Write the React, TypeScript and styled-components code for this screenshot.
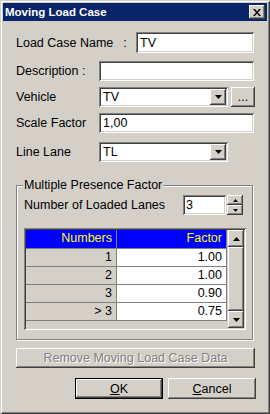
import React from 'react';
import styled, { createGlobalStyle, css } from 'styled-components';

const GlobalStyle = createGlobalStyle`
  html, body { margin: 0; padding: 0; background: #d4d0c8; }
  body {
    font-family: "Liberation Sans", Arial, sans-serif;
    font-size: 12.5px;
    color: #000;
  }
`;

const raised = css`
  background: #d4d0c8;
  box-shadow: inset -1px -1px #404040, inset 1px 1px #fff, inset -2px -2px #808080, inset 2px 2px #d4d0c8;
`;

const sunken = css`
  box-shadow: inset 1px 1px #808080, inset -1px -1px #fff, inset 2px 2px #404040, inset -2px -2px #d4d0c8;
`;

const Window = styled.div`
  width: 270px;
  height: 414px;
  box-sizing: border-box;
  padding: 3px;
  background: #d4d0c8;
  box-shadow: inset 1px 1px #d4d0c8, inset -1px -1px #404040, inset 2px 2px #fff, inset -2px -2px #808080;
  display: flex;
  flex-direction: column;
`;

const TitleBar = styled.div`
  height: 18px;
  flex: none;
  background: #0a246a;
  display: flex;
  align-items: center;
  justify-content: space-between;
  padding: 0 2px 0 2px;
`;

const Title = styled.span`
  color: #fff;
  font-weight: bold;
  font-size: 11.5px;
`;

const CloseButton = styled.div`
  ${raised};
  width: 16px;
  height: 14px;
  display: flex;
  align-items: center;
  justify-content: center;
`;

const Body = styled.div`
  padding: 0 13px;
  display: flex;
  flex-direction: column;
`;

const FieldRow = styled.div<{ $top: number; $h?: number }>`
  display: flex;
  align-items: center;
  height: ${p => p.$h ?? 20}px;
  margin-top: ${p => p.$top}px;
`;

const Label = styled.span<{ $width: number }>`
  width: ${p => p.$width}px;
  flex: none;
  white-space: nowrap;
`;

const Colon = styled.span`
  margin-left: 10px;
`;

const TextBox = styled.div<{ $width?: number }>`
  ${sunken};
  background: #fff;
  box-sizing: border-box;
  height: 100%;
  ${p => (p.$width ? `width: ${p.$width}px; flex: none;` : 'flex: 1;')}
  display: flex;
  align-items: center;
  padding: 0 4px;
  white-space: nowrap;
`;

const Combo = styled.div<{ $width: number }>`
  ${sunken};
  background: #fff;
  box-sizing: border-box;
  width: ${p => p.$width}px;
  height: 100%;
  flex: none;
  display: flex;
  align-items: center;
  padding: 2px 2px 2px 4px;
`;

const ComboText = styled.span`
  flex: 1;
`;

const DropButton = styled.div`
  ${raised};
  width: 16px;
  height: 100%;
  display: flex;
  align-items: center;
  justify-content: center;
`;

const SmallButton = styled.div<{ $width: number }>`
  ${raised};
  width: ${p => p.$width}px;
  height: 100%;
  flex: none;
  margin-left: 3px;
  margin-right: -1px;
  display: flex;
  align-items: center;
  justify-content: center;
`;

const GroupBox = styled.div`
  position: relative;
  margin-top: 23px;
  width: 237px;
  height: 155px;
  box-sizing: border-box;
  border: 1px solid #808080;
  box-shadow: inset 1px 1px #fff, 1px 1px #fff;
  padding: 9px 0 0 7px;
`;

const Legend = styled.span`
  position: absolute;
  top: -8px;
  left: 6px;
  padding: 0 1px;
  background: #d4d0c8;
  line-height: 15px;
`;

const SpinRow = styled.div`
  display: flex;
  align-items: center;
  height: 20px;
`;

const SpinBox = styled.div`
  ${sunken};
  background: #fff;
  box-sizing: border-box;
  width: 43px;
  height: 20px;
  padding: 0 3px;
  display: flex;
  align-items: center;
`;

const SpinButtons = styled.div`
  display: flex;
  flex-direction: column;
  width: 16px;
  height: 20px;
  margin-left: 1px;
`;

const SpinButton = styled.div`
  ${raised};
  flex: 1;
  display: flex;
  align-items: center;
  justify-content: center;
`;

const Grid = styled.div`
  ${sunken};
  margin-top: 13px;
  width: 222px;
  height: 102px;
  box-sizing: border-box;
  padding: 2px;
  display: flex;
  background: #d4d0c8;
`;

const Table = styled.div`
  display: grid;
  grid-template-columns: 91px 110px;
  grid-auto-rows: 18px;
  grid-template-rows: 19px;
  align-content: start;
  width: 201px;
`;

const Cell = styled.div<{ $kind: 'head' | 'key' | 'value' }>`
  box-sizing: border-box;
  border-right: 1px solid #808080;
  border-bottom: 1px solid #808080;
  padding-right: 4px;
  text-align: right;
  line-height: 17px;
  background: ${p => (p.$kind === 'head' ? '#0000ff' : p.$kind === 'key' ? '#d4d0c8' : '#fff')};
  color: ${p => (p.$kind === 'head' ? '#ffff00' : '#000')};
`;

const ScrollBar = styled.div`
  width: 16px;
  margin-left: auto;
  display: flex;
  flex-direction: column;
`;

const ScrollArrow = styled.div`
  ${raised};
  height: 17px;
  flex: none;
  display: flex;
  align-items: center;
  justify-content: center;
`;

const ScrollThumb = styled.div`
  ${raised};
  flex: 1;
`;

const PushButton = styled.div<{ $width?: number; $disabled?: boolean; $default?: boolean }>`
  ${raised};
  box-sizing: border-box;
  height: 21px;
  ${p => (p.$width ? `width: ${p.$width}px;` : '')}
  display: flex;
  align-items: center;
  justify-content: center;
  ${p => p.$disabled && 'color: #808080; text-shadow: 1px 1px #fff;'}
  ${p =>
    p.$default &&
    'box-shadow: inset 0 0 0 1px #000, inset -2px -2px #404040, inset 2px 2px #fff, inset -3px -3px #808080;'}
`;

const RemoveButton = styled(PushButton)`
  height: 20px;
  margin-top: 8px;
  margin-right: -1px;
`;

const ButtonRow = styled.div`
  display: flex;
  justify-content: flex-end;
  gap: 5px;
  margin-top: 10px;
  margin-right: -2px;
`;

const Mnemonic = styled.span`
  text-decoration: underline;
`;

const rows: [string, string][] = [
  ['1', '1.00'],
  ['2', '1.00'],
  ['3', '0.90'],
  ['> 3', '0.75'],
];

const DownTriangle = () => (
  <svg width="7" height="4" viewBox="0 0 7 4">
    <path d="M0 0h7L3.5 4z" fill="#000" />
  </svg>
);

const UpTriangle = ({ w = 7 }: { w?: number }) => (
  <svg width={w} height={(w + 1) / 2} viewBox={`0 0 ${w} ${(w + 1) / 2}`}>
    <path d={`M0 ${(w + 1) / 2}h${w}L${w / 2} 0z`} fill="#000" />
  </svg>
);

const SmallDown = () => (
  <svg width="5" height="3" viewBox="0 0 5 3">
    <path d="M0 0h5L2.5 3z" fill="#000" />
  </svg>
);

const App = () => {
  return (
    <>
      <GlobalStyle />
      <Window>
        <TitleBar>
          <Title>Moving Load Case</Title>
          <CloseButton>
            <svg width="8" height="7" viewBox="0 0 8 7">
              <path d="M0 0h2l2 2.5L6 0h2L5 3.5 8 7H6L4 4.5 2 7H0l3-3.5z" fill="#000" />
            </svg>
          </CloseButton>
        </TitleBar>
        <Body>
          <FieldRow $top={11} $h={21}>
            <Label $width={120}>
              Load Case Name<Colon>:</Colon>
            </Label>
            <TextBox>TV</TextBox>
          </FieldRow>
          <FieldRow $top={8}>
            <Label $width={83}>Description :</Label>
            <TextBox />
          </FieldRow>
          <FieldRow $top={6}>
            <Label $width={83}>Vehicle</Label>
            <Combo $width={129}>
              <ComboText>TV</ComboText>
              <DropButton>
                <DownTriangle />
              </DropButton>
            </Combo>
            <SmallButton $width={24}>...</SmallButton>
          </FieldRow>
          <FieldRow $top={6}>
            <Label $width={83}>Scale Factor</Label>
            <TextBox>1,00</TextBox>
          </FieldRow>
          <FieldRow $top={9}>
            <Label $width={83}>Line Lane</Label>
            <Combo $width={129}>
              <ComboText>TL</ComboText>
              <DropButton>
                <DownTriangle />
              </DropButton>
            </Combo>
          </FieldRow>

          <GroupBox>
            <Legend>Multiple Presence Factor</Legend>
            <SpinRow>
              <Label $width={159}>Number of Loaded Lanes</Label>
              <SpinBox>3</SpinBox>
              <SpinButtons>
                <SpinButton>
                  <UpTriangle w={5} />
                </SpinButton>
                <SpinButton>
                  <SmallDown />
                </SpinButton>
              </SpinButtons>
            </SpinRow>
            <Grid>
              <Table>
                <Cell $kind="head">Numbers</Cell>
                <Cell $kind="head">Factor</Cell>
                {rows.map(([n, f]) => (
                  <React.Fragment key={n}>
                    <Cell $kind="key">{n}</Cell>
                    <Cell $kind="value">{f}</Cell>
                  </React.Fragment>
                ))}
              </Table>
              <ScrollBar>
                <ScrollArrow>
                  <UpTriangle />
                </ScrollArrow>
                <ScrollThumb />
                <ScrollArrow>
                  <DownTriangle />
                </ScrollArrow>
              </ScrollBar>
            </Grid>
          </GroupBox>

          <RemoveButton $disabled>Remove Moving Load Case Data</RemoveButton>
          <ButtonRow>
            <PushButton $width={88} $default>
              <Mnemonic>O</Mnemonic>K
            </PushButton>
            <PushButton $width={88}>
              <Mnemonic>C</Mnemonic>ancel
            </PushButton>
          </ButtonRow>
        </Body>
      </Window>
    </>
  );
};

export default App;
